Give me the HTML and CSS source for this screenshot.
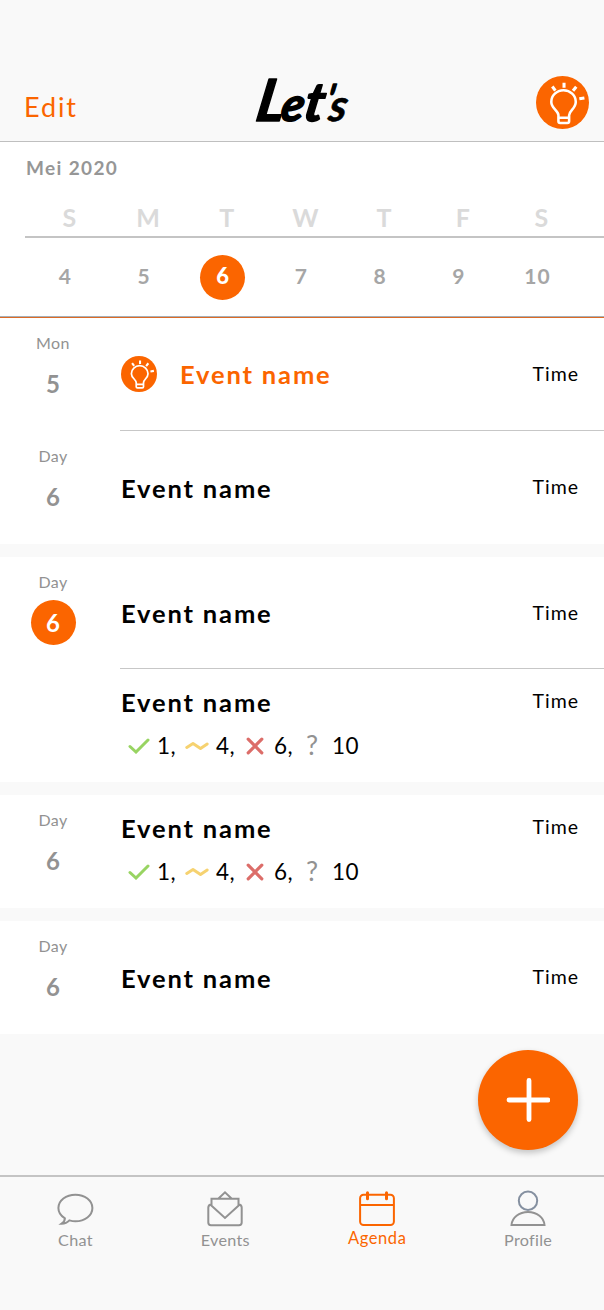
FILE: index.html
```html
<!DOCTYPE html>
<html lang="en">
<head>
<meta charset="utf-8">
<title>Let's – Agenda</title>
<link rel="stylesheet" href="styles.css">
</head>
<body>
<svg class="defs" width="0" height="0" aria-hidden="true">
  <symbol id="bulb" viewBox="0 0 52 52">
    <circle cx="26" cy="26" r="26" fill="#fb6500"/>
    <g fill="none" stroke="#fff" stroke-width="2.5">
      <path d="M22 44.500v-6C22 34 15 32 15 25.500a12 11.500 0 0 1 24 0C39 32 32.500 34 32.500 38.500v6q0 1.700-1.700 1.700h-7.100q-1.700 0-1.700-1.700zM22 41h10.500"/>
      <path d="M16 10.300l3 4M27.500 6.500v5M39.500 10.500l-3.200 4M42.500 22.300l5-.8" stroke-width="3"/>
    </g>
  </symbol>
  <symbol id="check" viewBox="0 0 22 16"><path d="M2 8.500l6 5.500L20 2" fill="none" stroke="#98d462" stroke-width="3" stroke-linecap="round"/></symbol>
  <symbol id="wave" viewBox="0 0 24 10"><path d="M1.800 6.400L8 2.500l7.500 5L22.200 3" fill="none" stroke="#f6d270" stroke-width="3" stroke-linecap="round" stroke-linejoin="round"/></symbol>
  <symbol id="cross" viewBox="0 0 18 18"><path d="M2.200 2.200l13.600 13.600M15.800 2.200L2.200 15.800" fill="none" stroke="#dc6d69" stroke-width="3.200" stroke-linecap="round"/></symbol>
</svg>
<div class="app">
  <header class="header">
    <a class="edit">Edit</a>
    <svg class="logo" width="100" height="56" viewBox="0 0 100 56"><text class="logo-text" transform="skewX(-10)" y="49"><tspan class="logo-l" x="7">L</tspan><tspan x="32">e</tspan><tspan class="logo-t" x="55">t</tspan><tspan class="logo-mark" x="75" y="42">'</tspan><tspan class="logo-s" x="80" y="49">s</tspan></text></svg>
    <svg class="header-bulb"><use href="#bulb"/></svg>
  </header>
  <section class="calendar">
    <div class="month">Mei 2020</div>
    <div class="weekdays"><span>S</span><span>M</span><span>T</span><span>W</span><span>T</span><span>F</span><span>S</span></div>
    <div class="dates"><span>4</span><span>5</span><span><b class="selected">6</b></span><span>7</span><span>8</span><span>9</span><span>10</span></div>
  </section>
  <main class="agenda">
    <section class="group">
      <article class="row">
        <div class="day"><span class="day-name">Mon</span><span class="day-num">5</span></div>
        <div class="event line"><svg class="event-bulb"><use href="#bulb"/></svg><h2 class="name accent">Event name</h2><time class="time">Time</time></div>
      </article>
      <article class="row">
        <div class="day"><span class="day-name">Day</span><span class="day-num">6</span></div>
        <div class="event"><h2 class="name">Event name</h2><time class="time">Time</time></div>
      </article>
    </section>
    <section class="group">
      <article class="row short">
        <div class="day"><span class="day-name">Day</span><span class="day-num today">6</span></div>
        <div class="event line"><h2 class="name">Event name</h2><time class="time">Time</time></div>
      </article>
      <article class="row">
        <div class="day"></div>
        <div class="event detailed">
          <div class="event-head"><h2 class="name">Event name</h2><time class="time">Time</time></div>
          <div class="stats"><svg class="check"><use href="#check"/></svg><span class="one">1,</span><svg class="wave"><use href="#wave"/></svg><span class="four">4,</span><svg class="cross"><use href="#cross"/></svg><span class="six">6,</span><span class="maybe">?</span><span class="ten">10</span></div>
        </div>
      </article>
    </section>
    <section class="group">
      <article class="row">
        <div class="day"><span class="day-name">Day</span><span class="day-num">6</span></div>
        <div class="event detailed">
          <div class="event-head"><h2 class="name">Event name</h2><time class="time">Time</time></div>
          <div class="stats"><svg class="check"><use href="#check"/></svg><span class="one">1,</span><svg class="wave"><use href="#wave"/></svg><span class="four">4,</span><svg class="cross"><use href="#cross"/></svg><span class="six">6,</span><span class="maybe">?</span><span class="ten">10</span></div>
        </div>
      </article>
    </section>
    <section class="group">
      <article class="row">
        <div class="day"><span class="day-name">Day</span><span class="day-num">6</span></div>
        <div class="event"><h2 class="name">Event name</h2><time class="time">Time</time></div>
      </article>
    </section>
  </main>
  <button class="fab" aria-label="Add event"><svg width="44" height="44" viewBox="0 0 44 44"><path d="M23 2.500v39M3 22h39" stroke="#fff" stroke-width="4.800" stroke-linecap="round"/></svg></button>
  <nav class="tabs">
    <a class="tab chat"><svg width="38" height="38" viewBox="0 0 38 38"><path d="M8.900 28.300C4.900 25.900 2.400 22.300 2.400 18 2.400 10.500 10 4.700 19.400 4.700S36.400 10.500 36.400 18s-7.600 13.300-17 13.300c-2.300 0-4.200-.4-6-.9-2 2.200-4.500 3.300-7.800 3.300 2.200-1.500 3.300-3 3.300-5.400z"/></svg><span>Chat</span></a>
    <a class="tab events"><svg width="38" height="38" viewBox="0 0 38 38"><path d="M5.500 15V8.700h27V15M12.500 8.500L19 2.300l6.500 6.200M5.700 14.200C2.700 14.600 2.300 16 2.300 17.500v15q0 2.700 2.700 2.700h28q2.700 0 2.700-2.700v-15c0-1.500-.4-2.900-3.400-3.300M4.500 14.700L19 28l14.500-13.300"/></svg><span>Events</span></a>
    <a class="tab agenda-tab"><svg width="38" height="38" viewBox="0 0 38 38"><rect x="2.100" y="4.700" width="33.800" height="30.300" rx="3.500"/><path d="M2 15h34"/><path d="M9.500 2.700v6M28.500 2.700v6" stroke-width="3" stroke-linecap="round"/></svg><span>Agenda</span></a>
    <a class="tab profile"><svg width="38" height="38" viewBox="0 0 38 38"><circle cx="19" cy="10.800" r="9.200" stroke="#8590a0"/><path d="M2.500 35C3 27.800 10 22 19 22s16 5.800 16.500 13z"/></svg><span>Profile</span></a>
  </nav>
</div>
</body>
</html>
```
FILE: styles.css
```css
* { box-sizing: border-box; }
body { margin: 0; background: #f9f9f9; font-family: Lato, "Open Sans", sans-serif; color: #000; }
.defs { position: absolute; }
.app { position: relative; width: 604px; height: 1310px; display: flex; flex-direction: column; background: #f9f9f9; overflow: hidden; }

.header { height: 142px; flex: none; display: grid; grid-template-columns: 1fr 100px 1fr; align-items: start; padding: 72px 15.500px 0 24px; border-bottom: 1px solid #bfbfbf; }
.edit { color: #fb6500; font-size: 27px; line-height: 36px; letter-spacing: 1.9px; margin-top: 17px; }
.logo { overflow: visible; }
.logo-text { font-family: Lato, sans-serif; font-style: italic; font-weight: 700; font-size: 47px; stroke: #000; stroke-width: 1.5px; stroke-linejoin: round; }
.logo-l { font-size: 58px; }
.logo-t { font-size: 54px; }
.logo-mark { font-size: 42px; font-weight: 400; }
.logo-s { font-size: 44px; stroke-width: .6px; }
.header-bulb { width: 53px; height: 53px; justify-self: end; margin-top: 3.500px; }

.calendar { height: 176px; flex: none; background: #fff; display: flex; flex-direction: column; padding-left: 25px; border-bottom: 1px solid #dc6a25; box-shadow: inset 0 -1px #a9b0b6; }
.month { height: 52px; line-height: 52px; padding-left: 1px; font-size: 19px; font-weight: 700; letter-spacing: 1.35px; color: #969696; }
.weekdays, .dates { display: grid; grid-template-columns: repeat(7, 78.7px); text-align: center; font-weight: 700; }
.weekdays { height: 44px; padding-left: 5px; font-size: 25px; line-height: 46px; color: #dadada; border-bottom: 2px solid #c4c4c4; }
.dates { height: 78px; line-height: 75px; padding-left: 1px; font-size: 21px; letter-spacing: 1px; color: #a6a6a6; }
.selected { display: inline-block; width: 45px; height: 45px; line-height: 41px; border-radius: 50%; background: #fb6500; color: #fff; font-size: 22px; letter-spacing: 0; }

.agenda { display: flex; flex-direction: column; gap: 13px; }
.group { background: #fff; }
.row { height: 113px; display: flex; }
.row.short { height: 112px; }
.day { width: 106px; margin-right: 14px; display: flex; flex-direction: column; align-items: center; padding-top: 14px; color: #929292; }
.day-name { font-size: 16px; line-height: 22px; letter-spacing: .4px; }
.day-num { font-size: 24px; font-weight: 700; width: 45px; height: 45px; line-height: 45px; margin-top: 7px; text-align: center; }
.today { background: #fb6500; color: #fff; border-radius: 50%; }
.event { flex: 1; display: flex; align-items: center; padding: 0 25px 0 1px; }
.line { border-bottom: 1px solid #c7c7c7; }
.event-bulb { width: 36px; height: 36px; margin-right: 23px; }
.name { margin: 0; font-size: 25.500px; line-height: 32px; font-weight: 700; letter-spacing: 1.850px; }
.accent { color: #fb6500; }
.time { margin-left: auto; font-size: 19.500px; line-height: 26px; letter-spacing: 1px; }
.row > .event:not(.line) > .time { margin-top: -1px; }
.detailed { flex-direction: column; align-items: stretch; padding-top: 16px; }
.event-head { display: flex; align-items: center; height: 34px; }
.event-head .time { margin-top: -2px; }
.stats { display: flex; align-items: center; height: 32px; margin-top: 11px; padding-left: 7px; font-size: 22.500px; line-height: 32px; letter-spacing: .4px; }
.check { width: 22px; height: 16px; }
.wave { width: 24px; height: 10px; margin-right: 7px; }
.cross { width: 18px; height: 18px; }
.one { width: 28px; margin-left: 7px; }
.four { width: 30px; }
.six { width: 32px; margin-left: 10px; }
.maybe { width: 26px; color: #929292; font-size: 27px; margin-top: -3px; }

.fab { position: absolute; left: 478px; top: 1050px; width: 100px; height: 100px; border: 0; border-radius: 50%; padding: 0; display: flex; align-items: center; justify-content: center; background: #fb6500; box-shadow: 0 3px 6px rgba(0,0,0,.22); }

.tabs { margin-top: auto; height: 135px; flex: none; display: grid; grid-template-columns: repeat(4, 150.900px); border-top: 2px solid #c4c4c4; }
.tab { display: flex; flex-direction: column; align-items: center; padding-top: 13px; color: #929292; font-size: 16.200px; letter-spacing: .3px; }
.events { padding-right: 2px; }
.tab svg { fill: none; stroke: currentColor; stroke-width: 2; }
.tab span { line-height: 21px; margin-top: 1px; }
.agenda-tab { color: #fb6500; font-size: 16.500px; letter-spacing: .6px; }
.agenda-tab span { margin-top: 0; }
```
